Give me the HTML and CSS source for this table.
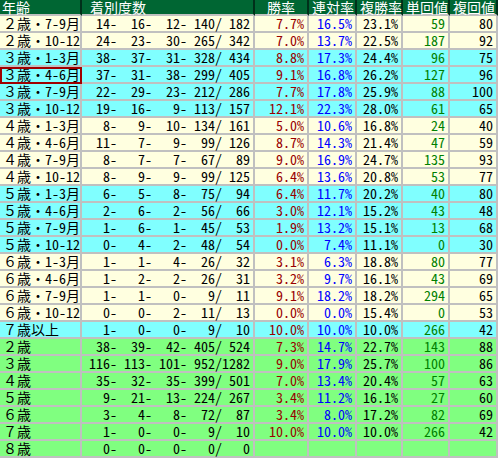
FILE: index.html
```html
<!DOCTYPE html>
<html lang="ja">
<head>
<meta charset="utf-8">
<title>年齢別成績</title>
<link rel="stylesheet" href="styles.css">
</head>
<body>
<table class="stats">
<colgroup>
<col class="c-age"><col class="c-rec"><col class="c-win"><col class="c-ren"><col class="c-fuku"><col class="c-tan"><col class="c-fkv">
</colgroup>
<thead>
<tr><th class="h-age">年齢</th><th class="h-rec">着別度数</th><th>勝率</th><th>連対率</th><th>複勝率</th><th>単回値</th><th>複回値</th></tr>
</thead>
<tbody>
<tr class="cream"><td class="age">２歳・<span class="hw">7-9</span>月</td><td class="num"> 14-  16-  12- 140/ 182</td><td class="num win">7.7%</td><td class="num ren">16.5%</td><td class="num">23.1%</td><td class="num tan">59</td><td class="num">80</td></tr>
<tr class="cream"><td class="age">２歳・<span class="hw">10-12</span></td><td class="num"> 24-  23-  30- 265/ 342</td><td class="num win">7.0%</td><td class="num ren">13.7%</td><td class="num">22.5%</td><td class="num tan">187</td><td class="num">92</td></tr>
<tr class="cyan"><td class="age">３歳・<span class="hw">1-3</span>月</td><td class="num"> 38-  37-  31- 328/ 434</td><td class="num win">8.8%</td><td class="num ren">17.3%</td><td class="num">24.4%</td><td class="num tan">96</td><td class="num">75</td></tr>
<tr class="cyan"><td class="age sel">３歳・<span class="hw">4-6</span>月</td><td class="num"> 37-  31-  38- 299/ 405</td><td class="num win">9.1%</td><td class="num ren">16.8%</td><td class="num">26.2%</td><td class="num tan">127</td><td class="num">96</td></tr>
<tr class="cyan"><td class="age">３歳・<span class="hw">7-9</span>月</td><td class="num"> 22-  29-  23- 212/ 286</td><td class="num win">7.7%</td><td class="num ren">17.8%</td><td class="num">25.9%</td><td class="num tan">88</td><td class="num">100</td></tr>
<tr class="cyan"><td class="age">３歳・<span class="hw">10-12</span></td><td class="num"> 19-  16-   9- 113/ 157</td><td class="num win">12.1%</td><td class="num ren">22.3%</td><td class="num">28.0%</td><td class="num tan">61</td><td class="num">65</td></tr>
<tr class="cream"><td class="age">４歳・<span class="hw">1-3</span>月</td><td class="num">  8-   9-  10- 134/ 161</td><td class="num win">5.0%</td><td class="num ren">10.6%</td><td class="num">16.8%</td><td class="num tan">24</td><td class="num">40</td></tr>
<tr class="cream"><td class="age">４歳・<span class="hw">4-6</span>月</td><td class="num"> 11-   7-   9-  99/ 126</td><td class="num win">8.7%</td><td class="num ren">14.3%</td><td class="num">21.4%</td><td class="num tan">47</td><td class="num">59</td></tr>
<tr class="cream"><td class="age">４歳・<span class="hw">7-9</span>月</td><td class="num">  8-   7-   7-  67/  89</td><td class="num win">9.0%</td><td class="num ren">16.9%</td><td class="num">24.7%</td><td class="num tan">135</td><td class="num">93</td></tr>
<tr class="cream"><td class="age">４歳・<span class="hw">10-12</span></td><td class="num">  8-   9-   9-  99/ 125</td><td class="num win">6.4%</td><td class="num ren">13.6%</td><td class="num">20.8%</td><td class="num tan">53</td><td class="num">77</td></tr>
<tr class="cyan"><td class="age">５歳・<span class="hw">1-3</span>月</td><td class="num">  6-   5-   8-  75/  94</td><td class="num win">6.4%</td><td class="num ren">11.7%</td><td class="num">20.2%</td><td class="num tan">40</td><td class="num">80</td></tr>
<tr class="cyan"><td class="age">５歳・<span class="hw">4-6</span>月</td><td class="num">  2-   6-   2-  56/  66</td><td class="num win">3.0%</td><td class="num ren">12.1%</td><td class="num">15.2%</td><td class="num tan">43</td><td class="num">48</td></tr>
<tr class="cyan"><td class="age">５歳・<span class="hw">7-9</span>月</td><td class="num">  1-   6-   1-  45/  53</td><td class="num win">1.9%</td><td class="num ren">13.2%</td><td class="num">15.1%</td><td class="num tan">13</td><td class="num">68</td></tr>
<tr class="cyan"><td class="age">５歳・<span class="hw">10-12</span></td><td class="num">  0-   4-   2-  48/  54</td><td class="num win">0.0%</td><td class="num ren">7.4%</td><td class="num">11.1%</td><td class="num tan">0</td><td class="num">30</td></tr>
<tr class="cream"><td class="age">６歳・<span class="hw">1-3</span>月</td><td class="num">  1-   1-   4-  26/  32</td><td class="num win">3.1%</td><td class="num ren">6.3%</td><td class="num">18.8%</td><td class="num tan">80</td><td class="num">77</td></tr>
<tr class="cream"><td class="age">６歳・<span class="hw">4-6</span>月</td><td class="num">  1-   2-   2-  26/  31</td><td class="num win">3.2%</td><td class="num ren">9.7%</td><td class="num">16.1%</td><td class="num tan">43</td><td class="num">69</td></tr>
<tr class="cream"><td class="age">６歳・<span class="hw">7-9</span>月</td><td class="num">  1-   1-   0-   9/  11</td><td class="num win">9.1%</td><td class="num ren">18.2%</td><td class="num">18.2%</td><td class="num tan">294</td><td class="num">65</td></tr>
<tr class="cream"><td class="age">６歳・<span class="hw">10-12</span></td><td class="num">  0-   0-   2-  11/  13</td><td class="num win">0.0%</td><td class="num ren">0.0%</td><td class="num">15.4%</td><td class="num tan">0</td><td class="num">53</td></tr>
<tr class="cyan"><td class="age">７歳以上</td><td class="num">  1-   0-   0-   9/  10</td><td class="num win">10.0%</td><td class="num ren">10.0%</td><td class="num">10.0%</td><td class="num tan">266</td><td class="num">42</td></tr>
<tr class="green"><td class="age">２歳</td><td class="num"> 38-  39-  42- 405/ 524</td><td class="num win">7.3%</td><td class="num ren">14.7%</td><td class="num">22.7%</td><td class="num tan">143</td><td class="num">88</td></tr>
<tr class="green"><td class="age">３歳</td><td class="num">116- 113- 101- 952/1282</td><td class="num win">9.0%</td><td class="num ren">17.9%</td><td class="num">25.7%</td><td class="num tan">100</td><td class="num">86</td></tr>
<tr class="green"><td class="age">４歳</td><td class="num"> 35-  32-  35- 399/ 501</td><td class="num win">7.0%</td><td class="num ren">13.4%</td><td class="num">20.4%</td><td class="num tan">57</td><td class="num">63</td></tr>
<tr class="green"><td class="age">５歳</td><td class="num">  9-  21-  13- 224/ 267</td><td class="num win">3.4%</td><td class="num ren">11.2%</td><td class="num">16.1%</td><td class="num tan">27</td><td class="num">60</td></tr>
<tr class="green"><td class="age">６歳</td><td class="num">  3-   4-   8-  72/  87</td><td class="num win">3.4%</td><td class="num ren">8.0%</td><td class="num">17.2%</td><td class="num tan">82</td><td class="num">69</td></tr>
<tr class="green"><td class="age">７歳</td><td class="num">  1-   0-   0-   9/  10</td><td class="num win">10.0%</td><td class="num ren">10.0%</td><td class="num">10.0%</td><td class="num tan">266</td><td class="num">42</td></tr>
<tr class="green"><td class="age">８歳</td><td class="num">  0-   0-   0-   0/   0</td><td class="num win"></td><td class="num ren"></td><td class="num"></td><td class="num tan"></td><td class="num"></td></tr>
</tbody>
</table>
</body>
</html>
```
FILE: styles.css
```css
html, body {
  margin: 0;
  padding: 0;
  background: #ffffff;
}

body {
  font-family: "Noto Sans Mono CJK JP", "Noto Sans CJK JP", monospace;
  font-size: 14px;
  color: #000000;
}

.stats {
  border-collapse: separate;
  border-spacing: 0;
  table-layout: fixed;
  width: 498px;
}

.c-age { width: 82px; }
.c-rec { width: 173px; }
.c-win { width: 54px; }
.c-ren { width: 48px; }
.c-fuku { width: 46px; }
.c-tan { width: 47px; }
.c-fkv { width: 48px; }

.stats th,
.stats td {
  box-sizing: border-box;
  padding: 0 3px;
  line-height: 15px;
  white-space: pre;
  font-weight: normal;
  border-right: 2px solid #c0c0c0;
  border-bottom: 2px solid #c0c0c0;
}

.stats th {
  height: 16px;
  line-height: 14px;
  background: #006633;
  color: #ffffff;
  text-align: center;
  border-right-color: #00301a;
}

.stats th.h-age {
  text-align: left;
  padding-left: 2px;
}

.stats th.h-rec {
  text-align: left;
  padding-left: 8px;
}

.stats td {
  height: 17px;
}

.cream td { background: #ffffe0; }
.cyan td { background: #80ffff; }
.green td { background: #80ff80; }

.age {
  text-align: left;
  padding-left: 3px;
}

.num,
.hw {
  font-feature-settings: "hwid" 1;
}

.num {
  text-align: right;
}

.win { color: #990000; }
.ren { color: #0000ff; }
.tan { color: #008000; }

.stats td.sel {
  outline: 2px solid #a00000;
  outline-offset: -2px;
}
```
